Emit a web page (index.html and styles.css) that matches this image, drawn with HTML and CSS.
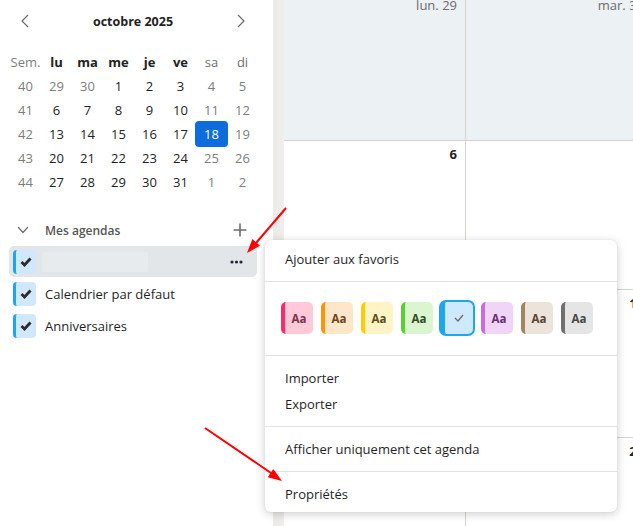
FILE: index.html
```html
<!DOCTYPE html>
<html lang="fr">
<head>
    <meta charset="UTF-8">
    <meta name="viewport" content="width=device-width, initial-scale=1.0">
    <link rel="stylesheet" href="styles.css">
    <title>Agenda</title>
</head>
<body>

<div class="app">
    <aside class="sidebar">
        <div class="mini-head">
            <svg class="nav" width="8" height="14" viewBox="0 0 8 14"><polyline points="7,1 1,7 7,13"/></svg>
            <span class="month">octobre 2025</span>
            <svg class="nav" width="8" height="14" viewBox="0 0 8 14"><polyline points="1,1 7,7 1,13"/></svg>
        </div>

        <div class="mini-grid">
            <span class="wk">Sem.</span>
            <span class="dh">lu</span><span class="dh">ma</span><span class="dh">me</span><span class="dh">je</span><span class="dh">ve</span>
            <span class="dh we">sa</span><span class="dh we">di</span>

            <span class="wk">40</span>
            <span class="out">29</span><span class="out">30</span><span>1</span><span>2</span><span>3</span><span class="we">4</span><span class="we">5</span>
            <span class="wk">41</span>
            <span>6</span><span>7</span><span>8</span><span>9</span><span>10</span><span class="we">11</span><span class="we">12</span>
            <span class="wk">42</span>
            <span>13</span><span>14</span><span>15</span><span>16</span><span>17</span><span class="today"><b>18</b></span><span class="we">19</span>
            <span class="wk">43</span>
            <span>20</span><span>21</span><span>22</span><span>23</span><span>24</span><span class="we">25</span><span class="we">26</span>
            <span class="wk">44</span>
            <span>27</span><span>28</span><span>29</span><span>30</span><span>31</span><span class="out">1</span><span class="out">2</span>
        </div>

        <div class="section-head">
            <svg class="chev" width="12" height="8" viewBox="0 0 12 8"><polyline points="1,1 6,6.5 11,1"/></svg>
            <span class="section-title">Mes agendas</span>
            <svg class="plus" width="14" height="14" viewBox="0 0 14 14"><path d="M7 0.5v13M0.5 7h13"/></svg>
        </div>

        <ul class="cal-list">
            <li class="cal-item active">
                <span class="check"><svg width="12" height="10" viewBox="0 0 12 10"><polyline points="1.5,5 4.5,8 10.5,1.5"/></svg></span>
                <span class="name-blank"></span>
                <svg class="more" width="13" height="4" viewBox="0 0 13 4"><circle cx="2" cy="2" r="1.6"/><circle cx="6.5" cy="2" r="1.6"/><circle cx="11" cy="2" r="1.6"/></svg>
            </li>
            <li class="cal-item">
                <span class="check"><svg width="12" height="10" viewBox="0 0 12 10"><polyline points="1.5,5 4.5,8 10.5,1.5"/></svg></span>
                <span class="name">Calendrier par défaut</span>
            </li>
            <li class="cal-item">
                <span class="check"><svg width="12" height="10" viewBox="0 0 12 10"><polyline points="1.5,5 4.5,8 10.5,1.5"/></svg></span>
                <span class="name">Anniversaires</span>
            </li>
        </ul>
    </aside>

    <div class="splitter"></div>

    <main class="month-view">
        <div class="cell first"><span class="day-label">lun. 29</span></div>
        <div class="cell first"><span class="day-label">mar. 30</span></div>
        <div class="cell"><span class="day-num">6</span></div>
        <div class="cell"><span class="day-num">7</span></div>
        <div class="cell"><span class="day-num">13</span></div>
        <div class="cell"><span class="day-num">14</span></div>
        <div class="cell"><span class="day-num">20</span></div>
        <div class="cell"><span class="day-num">21</span></div>
    </main>
</div>

<div class="menu">
    <div class="menu-item">Ajouter aux favoris</div>
    <div class="sep"></div>
    <div class="swatches">
        <span class="swatch pink">Aa</span>
        <span class="swatch orange">Aa</span>
        <span class="swatch yellow">Aa</span>
        <span class="swatch green">Aa</span>
        <span class="swatch blue selected"><svg width="10" height="8" viewBox="0 0 10 8"><polyline points="1,4 4,7 9,1"/></svg></span>
        <span class="swatch purple">Aa</span>
        <span class="swatch brown">Aa</span>
        <span class="swatch gray">Aa</span>
    </div>
    <div class="sep"></div>
    <div class="menu-item">Importer</div>
    <div class="menu-item">Exporter</div>
    <div class="sep"></div>
    <div class="menu-item">Afficher uniquement cet agenda</div>
    <div class="sep"></div>
    <div class="menu-item">Propriétés</div>
</div>

<!-- annotation arrows drawn over the screenshot -->
<svg class="arrows" width="633" height="526" viewBox="0 0 633 526">
    <line x1="286" y1="208" x2="256" y2="243"/>
    <polygon points="247,253 260,245.7 252.4,239.1"/>
    <line x1="205" y1="428" x2="271" y2="473"/>
    <polygon points="282,481 267.7,477.2 273.3,469"/>
</svg>

</body>
</html>
```

FILE: styles.css
```css
body {
    margin: 0;
    font-family: "Open Sans", "Noto Sans", sans-serif;
    font-size: 13px;
    color: #1f1f1f;
    background: #fff;
    overflow: hidden;
}

.app {
    display: flex;
    height: 526px;
    width: 633px;
    overflow: hidden;
}

.sidebar {
    width: 273px;
    flex-shrink: 0;
    background: #fff;
}

.splitter {
    width: 11px;
    flex-shrink: 0;
    background: linear-gradient(to right, #ebeae8, #efeeec);
}

/* mini month */
.mini-head {
    display: flex;
    align-items: center;
    justify-content: space-between;
    height: 42px;
    padding: 0 28px 0 21px;
}

.nav {
    fill: none;
    stroke: #6b6b6b;
    stroke-width: 1.2;
}

.month {
    font-weight: 700;
    font-size: 12.5px;
    color: #222;
}

.mini-grid {
    display: grid;
    grid-template-columns: repeat(8, 31px);
    grid-auto-rows: 24px;
    padding-left: 10px;
    margin-top: 8px;
}

.mini-grid span {
    display: flex;
    align-items: center;
    justify-content: center;
    color: #222;
}

.mini-grid .wk {
    color: #7d7d7d;
}

.mini-grid .dh {
    font-weight: 700;
}

.mini-grid .dh.we {
    font-weight: 400;
    color: #6e6e6e;
}

.mini-grid .we,
.mini-grid .out {
    color: #7d7d7d;
}

.mini-grid .today b {
    display: flex;
    align-items: center;
    justify-content: center;
    width: 33px;
    height: 26px;
    flex-shrink: 0;
    border-radius: 4px;
    background: #0f6cdd;
    color: #fff;
    font-weight: 400;
}

/* calendar list */
.section-head {
    display: flex;
    align-items: center;
    height: 24px;
    margin-top: 24px;
    padding: 0 26px 0 17px;
}

.chev {
    fill: none;
    stroke: #6b6b6b;
    stroke-width: 1.2;
}

.section-title {
    flex: 1;
    margin-left: 16px;
    font-size: 12px;
    font-weight: 600;
    color: #555;
}

.plus {
    stroke: #6b6b6b;
    stroke-width: 1.6;
}

.cal-list {
    list-style: none;
    margin: 4px 0 0;
    padding: 0;
}

.cal-item {
    display: flex;
    align-items: center;
    height: 32px;
    margin: 0 16px 0 9px;
    padding-left: 4px;
    border-radius: 5px;
}

.cal-item.active {
    height: 31px;
    margin-bottom: 1px;
    background: #e2e6e9;
}

.check {
    display: flex;
    align-items: center;
    justify-content: center;
    width: 20px;
    height: 24px;
    border-left: 3px solid #1da5f2;
    border-radius: 4px;
    background: #cfe8fc;
}

.check svg {
    fill: none;
    stroke: #2b2b2b;
    stroke-width: 2.8;
}

.name {
    margin-left: 9px;
    font-size: 13px;
    color: #1f1f1f;
}

.name-blank {
    width: 106px;
    height: 20px;
    margin-left: 6px;
    border-radius: 2px;
    background: #e8ebed;
}

.more {
    margin-left: auto;
    margin-right: 14px;
    fill: #1d2a3c;
}

/* month view */
.month-view {
    display: grid;
    grid-template-columns: 182px 187px;
    grid-template-rows: 141px 149px 148px 149px;
    flex-shrink: 0;
}

.cell {
    display: flex;
    justify-content: flex-end;
    align-items: flex-start;
    border-right: 1px solid #d6d3cf;
    border-bottom: 1px solid #d6d3cf;
    padding-right: 8px;
}

.cell.first {
    background: #ecf1f4;
}

.day-label {
    margin-top: -4px;
    font-size: 13px;
    color: #6c6c6c;
}

.day-num {
    margin-top: 4px;
    font-size: 13px;
    font-weight: 700;
    color: #222;
}

/* context menu */
.menu {
    position: absolute;
    left: 265px;
    top: 240px;
    width: 352px;
    padding: 6px 0 5px;
    background: #fff;
    border-radius: 6px;
    box-shadow: 0 2px 10px rgba(0, 0, 0, 0.2), 0 0 1px rgba(0, 0, 0, 0.15);
}

.menu-item {
    height: 26px;
    line-height: 26px;
    padding: 0 20px;
    font-size: 13px;
    color: #1f1f1f;
}

.sep {
    height: 1px;
    margin: 9px 0;
    background: #e2e2e2;
}

.swatches {
    display: flex;
    gap: 8px;
    padding: 11px 16px 12px;
}

.swatch {
    display: flex;
    align-items: center;
    justify-content: center;
    width: 28px;
    height: 32px;
    border-left: 4px solid;
    border-radius: 5px;
    font-size: 11.5px;
    font-weight: 700;
}

.pink { border-color: #ff2a68; background: #ffc9d9; color: #7a3050; }
.orange { border-color: #ff9500; background: #ffe6c8; color: #6b4418; }
.yellow { border-color: #ffcc00; background: #fff4c6; color: #5a4c1a; }
.green { border-color: #5ccf30; background: #dcf5d1; color: #2f4c24; }
.purple { border-color: #c86be0; background: #f0d5f6; color: #632f74; }
.brown { border-color: #a2845e; background: #ece3da; color: #574431; }
.gray { border-color: #707070; background: #e5e5e5; color: #474747; }

.blue.selected {
    background: #cfe9fc;
    border-color: #1da5f2;
    box-shadow: 0 0 0 2px #1da5f2;
}

.blue svg {
    fill: none;
    stroke: #6b6b6b;
    stroke-width: 1.3;
}

.arrows {
    position: absolute;
    left: 0;
    top: 0;
    pointer-events: none;
}

.arrows line {
    stroke: #ff0000;
    stroke-width: 2;
}

.arrows polygon {
    fill: #ff0000;
}
```
